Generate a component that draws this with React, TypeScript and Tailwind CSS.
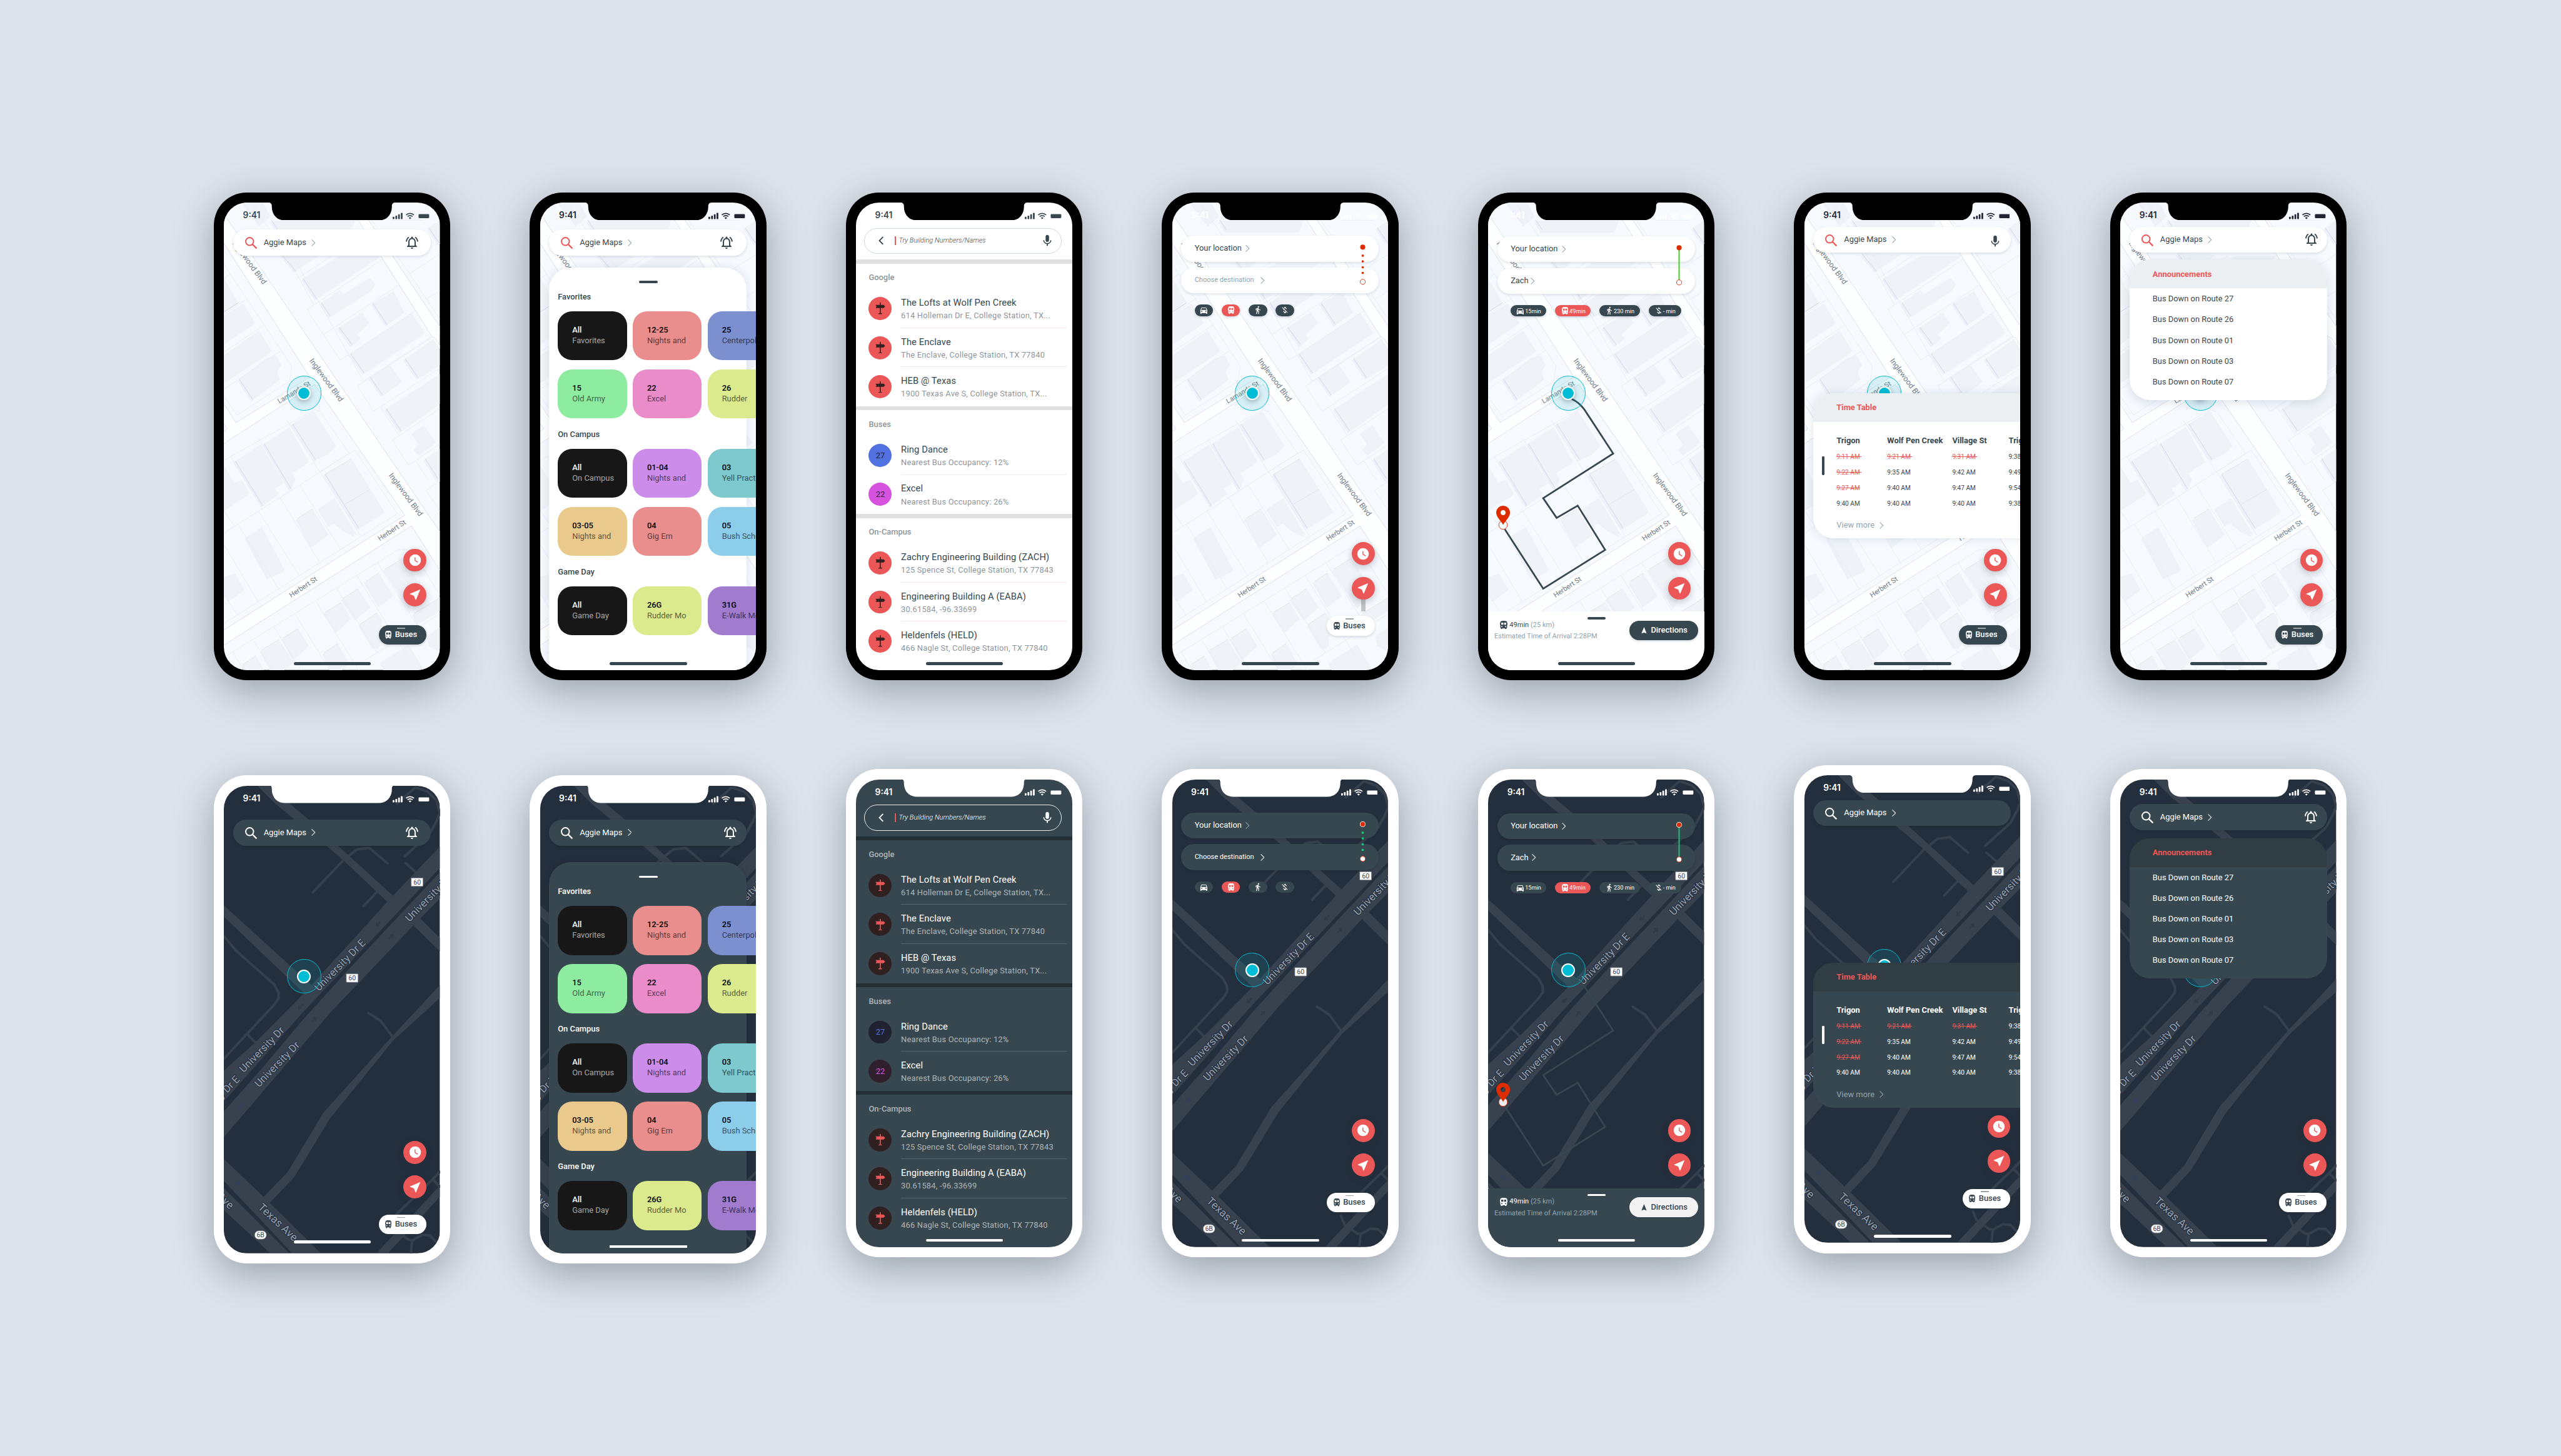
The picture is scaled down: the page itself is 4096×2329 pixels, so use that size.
import React from "react";
import {
  MdDirectionsCar,
  MdDirectionsWalk,
  MdMic,
  MdMoneyOff,
  MdNavigation,
  MdNearMe,
  MdOutlineNotificationsActive,
  MdWatchLater,
} from "react-icons/md";

type Pt = [number, number];
const SX = 1 / 3;
const SY = 1 / 1.7818;

/* Map geometry is digitised on a 1125 x 1447 grid and projected to the 375 x 812 screen. */
const path = (src: string, ox: number, oy: number, close: boolean) => {
  const pts: Pt[] = src
    .trim()
    .split(/\s+/)
    .map((p) => {
      const [x, y] = p.split(",").map(Number);
      return [(x - ox) * SX, (y - oy) * SY] as Pt;
    });
  return "M" + pts.map(([x, y]) => `${x.toFixed(1)} ${y.toFixed(1)}`).join("L") + (close ? "Z" : "");
};
const L = (s: string) => path(s, 87, 57, false);
const LA = (s: string) => path(s, 87, 57, true);
const D = (s: string) => path(s, 87, 80, false);
const DA = (s: string) => path(s, 87, 80, true);

const lightRoads = [
  "87,92 215,204 1212,1075 1212,1195 1065,1058 87,1427 87,1380 1030,1025 560,620 87,803 87,740 105,757 87,770 87,680 150,738 535,597 87,183",
  "729,57 780,57 840,110 975,230 1212,440 1212,510 1170,470 905,222",
];
const lightBlocks = ["87,740 105,757 87,768"];
const roadEdges = [
  "87,183 535,597 150,738 87,680",
  "87,740 105,757 87,766",
  "87,92 215,204 1212,1075",
  "87,803 560,620 1030,1025 87,1380",
  "87,1427 1065,1058 1212,1195",
  "729,57 905,222 1170,470 1190,478 1212,500",
  "780,57 975,230 1212,440",
];
const parcels = [
  "87,245 120,278 440,562 430,610 155,715 87,655",
  "87,293 120,278",
  "87,403 207,355",
  "87,520 298,436",
  "87,635 383,516",
  "230,57 400,205 555,373",
  "468,293 650,222",
  "520,388 915,232",
  "520,388 695,545 1085,393",
  "608,465 997,313",
  "440,215 815,610",
  "815,610 1175,470",
  "920,240 1175,470",
  "782,625 868,703 1212,570",
  "782,625 1212,459",
  "905,692 1000,777",
  "965,792 1050,870 1212,805",
  "965,792 1212,695",
  "1087,858 1150,915",
  "1212,920 1140,948 1212,1010",
  "1055,277 1212,217",
  "1140,357 1212,330",
  "860,112 1055,277 1212,418",
  "960,112 1130,112",
  "87,855 560,698 590,705 740,833 590,890 380,970 87,1080",
  "590,890 770,823 990,1020 87,1360",
  "120,842 290,1000",
  "268,787 440,945",
  "415,730 800,1088",
  "483,932 695,1130",
  "380,970 585,1170",
  "268,1012 480,1212",
  "160,1052 372,1252",
  "87,1115 265,1292",
  "87,1010 140,1057",
  "87,1270 157,1333",
  "87,1465 1000,1130 1065,1133 1212,1270",
  "135,1450 190,1504",
  "245,1415 340,1504",
  "350,1373 490,1504",
  "460,1332 640,1504",
  "567,1292 790,1504",
  "675,1252 885,1450",
  "780,1212 1040,1460",
  "888,1172 1110,1380",
  "820,1475 1212,1330",
];
const buildings = [
  "87,290 163,367 87,396",
  "87,405 190,370 250,430 87,495",
  "87,530 270,453 337,517 87,615",
  "168,604 305,540 360,530 387,560 365,580 378,605 238,667",
  "385,215 460,268 585,218",
  "190,57 290,57 330,100 280,125",
  "335,112 770,112 750,145 370,145",
  "500,292 690,222 905,222 570,355",
  "595,367 690,328 712,340 848,290 877,310 858,328 640,410",
  "688,443 808,397 845,430 780,465 798,478 755,500",
  "862,368 973,332 1027,398 937,435",
  "748,525 1065,398 1133,460 818,585",
  "850,598 952,558 1015,612 915,653",
  "1032,540 1190,475 1212,500 1212,560 1100,600",
  "933,695 1212,587 1212,680 1010,765",
  "1073,768 1130,746 1192,800 1112,835 1085,818 1112,800",
  "1137,850 1212,820 1212,920 1200,912",
  "1155,135 1212,112 1212,185",
  "147,857 280,805 400,925 350,940 372,958 290,995",
  "297,803 430,752 530,860 440,893 460,915 437,945",
  "445,742 555,702 672,810 640,830 565,853",
  "615,898 752,850 925,1015 790,1065",
  "470,1035 550,1005 632,1085 550,1120",
  "585,1003 665,972 780,1087 720,1070 670,1045 640,1055",
  "205,1092 285,1062 405,1195 320,1218",
  "87,870 140,925 180,915 222,958 87,1010",
  "87,1215 145,1205 193,1255 120,1287 87,1255",
  "283,1442 375,1410 450,1480 400,1504 340,1504",
  "395,1405 475,1376 530,1430 455,1468",
  "615,1325 700,1295 750,1345 680,1383",
  "707,1283 787,1252 850,1310 780,1345",
  "797,1362 885,1327 910,1345 900,1432 870,1432",
  "827,1230 895,1204 970,1275 900,1305",
  "927,1192 1020,1158 1110,1240 1060,1310",
  "1080,1328 1212,1280 1212,1320 1100,1360",
  "910,1478 1050,1425 1130,1504 930,1504",
  "1155,1395 1212,1372 1212,1440 1165,1425",
  "610,1450 680,1422 740,1485 700,1504 650,1504",
  "185,1487 255,1460 295,1504 200,1504",
];
const buildingSides = [
  "385,215 460,268",
  "335,112 370,142",
  "500,292 570,355",
  "595,367 640,407",
  "688,443 755,497",
  "862,368 937,435",
  "748,525 818,585",
  "850,598 915,653",
  "1032,540 1100,600",
  "933,695 1010,763",
  "1137,850 1203,912",
  "1155,135 1212,185",
  "168,604 238,667",
  "147,857 290,995",
  "297,803 437,943",
  "445,742 565,853",
  "615,898 790,1065",
  "87,396 163,367",
];
const buildingTops = [
  "712,993 850,945",
  "615,898 752,850",
  "283,1442 375,1410",
  "395,1405 475,1376",
  "615,1325 700,1295",
  "707,1283 787,1252",
  "797,1362 885,1327",
  "827,1230 895,1204",
  "927,1192 1020,1158",
  "1080,1328 1212,1280",
  "610,1450 680,1422",
  "185,1487 255,1460",
  "470,1035 550,1005",
];

function LightLabel({ x, y, angle, size, children }: { x: number; y: number; angle: number; size: number; children: string }) {
  return (
    <text
      transform={`translate(${x} ${y}) rotate(${angle})`}
      fontSize={size}
      fill="#717d89"
      stroke="#ffffff"
      strokeWidth="2"
      paintOrder="stroke"
      fontFamily="Roboto, sans-serif"
    >
      {children}
    </text>
  );
}

function LightMap() {
  return (
    <svg viewBox="0 0 375 812" className="absolute inset-0 h-[812px] w-[375px]">
      <rect width="375" height="812" fill="#f6f9fe" />
      <g fill="#eff1fa" transform="translate(-3 3)">
        {buildings.map((b) => (
          <path key={b} d={LA(b)} />
        ))}
      </g>
      <g fill="#eff3f8">
        {buildings.map((b) => (
          <path key={b} d={LA(b)} />
        ))}
      </g>
      <g fill="none" stroke="#e8ecf4" strokeWidth="0.9">
        {parcels.map((b) => (
          <path key={b} d={L(b)} />
        ))}
      </g>
      <g fill="none" stroke="#dadeee" strokeWidth="1.3">
        {buildingSides.map((b) => (
          <path key={b} d={L(b)} />
        ))}
      </g>
      <g fill="none" stroke="#e0e3e9" strokeWidth="1">
        {buildingTops.map((b) => (
          <path key={b} d={L(b)} />
        ))}
      </g>
      <g fill="#fdfefe">
        {lightRoads.map((b) => (
          <path key={b} d={LA(b)} />
        ))}
      </g>
      <g fill="#f6f9fe">
        {lightBlocks.map((b) => (
          <path key={b} d={LA(b)} />
        ))}
      </g>
      <g fill="none" stroke="#e4e7ef" strokeWidth="1.2">
        {roadEdges.map((b) => (
          <path key={b} d={L(b)} />
        ))}
      </g>
      <LightLabel x={14.5} y={71} angle={53.5} size={13.2}>Inglewood Blvd</LightLabel>
      <LightLabel x={148} y={275} angle={53.5} size={13.2}>Inglewood Blvd</LightLabel>
      <LightLabel x={286} y={474} angle={53.5} size={13.2}>Inglewood Blvd</LightLabel>
      <LightLabel x={117} y={686.5} angle={-33.5} size={12.2}>Herbert St</LightLabel>
      <LightLabel x={271} y={588} angle={-33.5} size={12.2}>Herbert St</LightLabel>
      <LightLabel x={96.5} y={349.5} angle={-31} size={12}>Lamanda St</LightLabel>
    </svg>
  );
}

const darkAreas = [
  "87,962 265,866 500,725 968,420 1212,268 1212,335 500,780 87,1057",
  "87,1088 300,945 500,803 750,640 1212,348 1212,430 1075,512 645,780 87,1168",
  "262,80 325,80 430,135 540,190 680,265 968,420 940,440 710,310 620,265 355,135",
  "87,450 545,697 505,722 87,485",
  "1110,490 1212,550 1212,592 1075,512",
  "1212,697 960,858 605,1092 420,1275 295,1352 325,1372 455,1290 640,1110 970,868 1212,737",
  "87,1235 300,1355 590,1525 440,1525 87,1303",
  "87,1325 425,1525 325,1525 87,1393",
  "1212,1318 885,1525 945,1525 1212,1353",
];
const darkLanes = [
  "87,545 150,590 350,695 372,720 372,738 350,757 87,925",
  "210,850 265,882",
  "550,410 710,310 780,277 845,272 940,320",
  "815,452 885,408",
  "1030,298 1160,228 1195,190 1212,165 1195,125 1150,98 1085,85 990,135",
  "1035,320 1090,348",
  "840,783 905,808 970,860",
  "980,1410 1175,1298 1212,1275",
  "1175,1298 1212,1320",
  "965,1430 985,1458 1050,1485 1068,1487 1120,1470 1160,1472 1190,1490",
  "1068,1487 1062,1525",
];

function DarkLabel({ x, y, angle, end, size = 18, children }: {
  x: number;
  y: number;
  angle: number;
  end?: boolean;
  size?: number;
  children: string;
}) {
  return (
    <text
      transform={`translate(${x} ${y}) rotate(${angle})`}
      fontSize={size}
      fill="#96a0ad"
      stroke="#242f3e"
      strokeWidth="2.6"
      strokeLinejoin="round"
      paintOrder="stroke"
      textAnchor={end ? "end" : "start"}
      fontFamily="Roboto, sans-serif"
    >
      {children}
    </text>
  );
}

function Shield({ x, y, round, children }: { x: number; y: number; round?: boolean; children: string }) {
  return (
    <g>
      <rect x={x} y={y} width="20.5" height="14.5" rx={round ? 7 : 0.5} fill="#ffffff" stroke="#6b6f76" strokeWidth="0.8" />
      <text x={x + 10.25} y={y + 11.3} fontSize="11.5" textAnchor="middle" fill="#3c4350" fontFamily="Roboto, sans-serif">
        {children}
      </text>
    </g>
  );
}

function LaneArrow({ x, y, angle, color }: { x: number; y: number; angle: number; color: string }) {
  return (
    <path
      transform={`translate(${x} ${y}) rotate(${angle})`}
      d="M-6 0H3M0 -3.5L4.5 0L0 3.5"
      fill="none"
      stroke={color}
      strokeWidth="2"
    />
  );
}

function DarkMap() {
  return (
    <svg viewBox="0 0 375 812" className="absolute inset-0 h-[812px] w-[375px]">
      <rect width="375" height="812" fill="#242f3d" />
      <g fill="none" stroke="#36404c" strokeWidth="4.4" strokeLinejoin="round" strokeLinecap="round">
        {darkLanes.map((b) => (
          <path key={b} d={D(b)} />
        ))}
      </g>
      <g fill="#38414e">
        {darkAreas.map((b) => (
          <path key={b} d={DA(b)} />
        ))}
      </g>
      <LaneArrow x={27.5} y={557} angle={-45} color="#333f5e" />
      <LaneArrow x={26} y={692} angle={215} color="#333f5e" />
      <LaneArrow x={157} y={406} angle={-45} color="#303945" />
      <LaneArrow x={133} y={384} angle={135} color="#303945" />
      <LaneArrow x={291} y={262} angle={-45} color="#303945" />
      <LaneArrow x={268} y={240} angle={135} color="#303945" />
      <DarkLabel x={165} y={357.5} angle={-45.5} size={18.3}>University Dr E</DarkLabel>
      <DarkLabel x={34.5} y={499} angle={-45.5} size={18.3}>University Dr</DarkLabel>
      <DarkLabel x={61} y={524.5} angle={-45.5} size={18.3}>University Dr</DarkLabel>
      <DarkLabel x={322.5} y={237} angle={-45.5} size={18.3}>University Dr</DarkLabel>
      <DarkLabel x={28.5} y={511} angle={-45.5} end>University Dr E</DarkLabel>
      <DarkLabel x={58.5} y={733.5} angle={43} size={19}>Texas Ave</DarkLabel>
      <DarkLabel x={10} y={736} angle={43} end size={19}>Texas Ave</DarkLabel>
      <Shield x={212.7} y={326.7}>60</Shield>
      <Shield x={325.5} y={160}>60</Shield>
      <Shield x={53.5} y={773} round>6B</Shield>
    </svg>
  );
}

function Marker({ dark }: { dark: boolean }) {
  return (
    <div className="absolute left-[109px] top-[301px] flex size-[60px] items-center justify-center rounded-full border border-[#00bcd4] bg-[#00bcd4]/12">
      <div
        className={
          dark
            ? "size-[24px] rounded-full border-[3px] border-white bg-[#00bcd4]"
            : "size-[24px] rounded-full border-[3px] border-white bg-[#00bcd4] shadow-[0_3px_10px_rgba(0,0,0,0.3)]"
        }
      />
    </div>
  );
}

function Chevron({ className }: { className: string }) {
  return (
    <svg viewBox="0 0 7 12" className={className} fill="none" stroke="currentColor" strokeWidth="1.1">
      <path d="M0.6 0.5L6.2 6L0.6 11.5" />
    </svg>
  );
}

function BusIcon({ className }: { className: string }) {
  return (
    <svg viewBox="0 0 22 26" preserveAspectRatio="none" className={className} fill="currentColor">
      <path
        fillRule="evenodd"
        d="M11 0C4.5 0 1 1.3 1 4.6V7H0V13H1V20.6C1 21.8 1.8 22.7 2.8 23V25C2.8 25.6 3.3 26 3.9 26H6C6.6 26 7.1 25.6 7.1 25V23.4H14.9V25C14.9 25.6 15.4 26 16 26H18.1C18.7 26 19.2 25.6 19.2 25V23C20.2 22.7 21 21.8 21 20.6V13H22V7H21V4.6C21 1.3 17.5 0 11 0ZM3.6 6H9.8V12.4H3.6ZM12.2 6H18.4V12.4H12.2ZM5.6 16.2A1.8 1.8 0 1 1 5.6 19.8A1.8 1.8 0 1 1 5.6 16.2ZM16.4 16.2A1.8 1.8 0 1 1 16.4 19.8A1.8 1.8 0 1 1 16.4 16.2Z"
      />
    </svg>
  );
}

function SignpostIcon() {
  return (
    <svg viewBox="0 0 17 20" className="h-[20px] w-[17px]" fill="currentColor">
      <path d="M7.6 0H9.4V4.2H14.4L17 6.9L14.4 9.6H9.4V18.4H11.6V20H5.4V18.4H7.6V9.6H0.6L2 6.9L0.4 4.2H7.6Z" />
    </svg>
  );
}

function StatusBar({ tone }: { tone: string }) {
  return (
    <div className={`relative flex h-[44px] shrink-0 items-start ${tone}`}>
      <span className="ml-[33px] mt-[15px] w-[54px] font-[Inter] text-[15px] leading-[15px] font-semibold">9:41</span>
      <svg viewBox="0 0 64 12" className="ml-[206px] mt-[17px] h-[12px] w-[64px]" fill="currentColor">
        <rect x="0" y="7.4" width="3" height="4" rx="0.8" />
        <rect x="4.8" y="5.4" width="3" height="6" rx="0.8" />
        <rect x="9.5" y="3" width="3" height="8.4" rx="0.8" />
        <rect x="14.2" y="0.6" width="3" height="10.8" rx="0.8" />
        <g fill="none" stroke="currentColor" strokeWidth="1.9">
          <path d="M23.4 4.2A10.2 10.2 0 0 1 37 4.2" />
          <path d="M25.8 7A6.4 6.4 0 0 1 34.6 7" />
        </g>
        <path d="M27.9 9.2A3.3 3.3 0 0 1 32.5 9.2L30.2 11.5Z" />
        <rect x="45" y="2.6" width="18.4" height="7.2" rx="1.6" />
      </svg>
    </div>
  );
}

function Notch({ color }: { color: string }) {
  return (
    <svg viewBox="0 0 221 31" className="absolute left-[77px] top-[-0.5px] h-[31px] w-[221px]" fill={color}>
      <path d="M0 0C4 0 6.2 2 6.2 6V7.5C6.5 21 15 31 29 31H192C206 31 214.500 21 214.800 7.500V6C214.800 2 217 0 221 0Z" />
    </svg>
  );
}

function HomeBar({ color, top = "top-[798px]" }: { color: string; top?: string }) {
  return <div className={`absolute left-[121px] h-[5px] w-[134px] ${top} ${color}`} />;
}

function Phone({ dark, drop = "", backdrop, route, status, children, home }: {
  dark: boolean;
  drop?: string;
  backdrop?: string;
  route?: React.ReactNode;
  status?: string;
  children: React.ReactNode;
  home?: React.ReactNode;
}) {
  return (
    <div
      className={`shrink-0 rounded-[57px] p-[18px] shadow-[0_18px_68px_rgba(40,50,65,0.37)] ${dark ? "bg-white" : "bg-black"} ${drop}`}
    >
      <div className={`relative flex h-[812px] w-[375px] flex-col overflow-hidden rounded-[40px] ${backdrop ?? ""}`}>
        {!backdrop && (dark ? <DarkMap /> : <LightMap />)}
        {route}
        {!backdrop && <Marker dark={dark} />}
        <StatusBar tone={status ?? (dark ? "text-white" : "text-[#232535]")} />
        {children}
        <Notch color={dark ? "#ffffff" : "#000000"} />
        {home ?? <HomeBar color={dark ? "rounded-full bg-white" : "rounded-full bg-[#37474f]"} />}
      </div>
    </div>
  );
}

const barBase = "relative mx-[16px] flex h-[45px] shrink-0 items-center rounded-[22.5px]";
const lightSurface = "bg-white shadow-[0_2px_5px_rgba(40,60,80,0.14)]";
const darkSurface = "bg-[#37474f] shadow-[0_2px_6px_rgba(0,0,0,0.1)]";

function SearchBar({ dark, offset, trailing }: { dark: boolean; offset: string; trailing?: React.ReactNode }) {
  return (
    <div className={`${barBase} ${offset} ${dark ? darkSurface : lightSurface}`}>
      <svg
        viewBox="0 0 21 21"
        className={`ml-[20.5px] mt-[2px] size-[21px] ${dark ? "text-white" : "text-[#eb5757]"}`}
        fill="none"
        stroke="currentColor"
        strokeWidth="2.1"
      >
        <circle cx="7.9" cy="7.9" r="6.8" />
        <path d="M12.700 12.700L20 20" strokeWidth="2.500" />
      </svg>
      <span className={`ml-[11.500px] text-[14px] leading-[16px] ${dark ? "text-white" : "text-[#37474f]"}`}>Aggie Maps</span>
      <Chevron className={`ml-[9px] h-[12px] w-[7px] ${dark ? "text-white" : "text-[#90a4ae]"}`} />
      {trailing}
    </div>
  );
}

function Bell({ dark, place }: { dark: boolean; place: string }) {
  return (
    <MdOutlineNotificationsActive className={`absolute size-[26px] ${place} ${dark ? "text-white" : "text-[#37474f]"}`} />
  );
}

function Fabs({ place }: { place: string }) {
  return (
    <div className={`absolute flex flex-col gap-[20px] ${place}`}>
      <div className="flex size-[40px] items-center justify-center rounded-full bg-[#eb5757] text-white shadow-[0_4px_12px_rgba(30,45,60,0.25)]">
        <MdWatchLater className="size-[24px]" />
      </div>
      <div className="flex size-[40px] items-center justify-center rounded-full bg-[#eb5757] text-white shadow-[0_4px_12px_rgba(30,45,60,0.25)]">
        <MdNearMe className="size-[24px]" />
      </div>
    </div>
  );
}

function BusesPill({ place, filled }: { place: string; filled?: boolean }) {
  return (
    <div
      className={`absolute flex h-[34px] w-[83px] items-center rounded-full shadow-[0_2px_5px_rgba(30,45,60,0.15)] ${place} ${
        filled ? "bg-[#37474f] text-white" : "bg-white text-[#37474f]"
      }`}
    >
      <div className="absolute left-[32px] top-[4px] h-[2px] w-[14px] bg-[#9ea3a6]" />
      <BusIcon className="ml-[11px] h-[13.500px] w-[11px]" />
      <span className="ml-[6px] text-[14px] leading-[16px] font-medium">Buses</span>
    </div>
  );
}

type Card = { code: string; name: string; tone: string };
const groups: { title: string; rows: Card[][] }[] = [
  {
    title: "Favorites",
    rows: [
      [
        { code: "All", name: "Favorites", tone: "bg-[#171717] text-white" },
        { code: "12-25", name: "Nights and", tone: "bg-[#e98e8c] text-black" },
        { code: "25", name: "Centerpole", tone: "bg-[#7c8fce] text-black" },
      ],
      [
        { code: "15", name: "Old Army", tone: "bg-[#8eeca1] text-black" },
        { code: "22", name: "Excel", tone: "bg-[#ea8cca] text-black" },
        { code: "26", name: "Rudder", tone: "bg-[#dbea8c] text-black" },
      ],
    ],
  },
  {
    title: "On Campus",
    rows: [
      [
        { code: "All", name: "On Campus", tone: "bg-[#171717] text-white" },
        { code: "01-04", name: "Nights and", tone: "bg-[#cb8cea] text-black" },
        { code: "03", name: "Yell Practice", tone: "bg-[#7dc9cd] text-black" },
      ],
      [
        { code: "03-05", name: "Nights and", tone: "bg-[#eaca8c] text-black" },
        { code: "04", name: "Gig Em", tone: "bg-[#e98e8c] text-black" },
        { code: "05", name: "Bush School", tone: "bg-[#8ccdea] text-black" },
      ],
    ],
  },
  {
    title: "Game Day",
    rows: [
      [
        { code: "All", name: "Game Day", tone: "bg-[#171717] text-white" },
        { code: "26G", name: "Rudder Mo", tone: "bg-[#dbea8c] text-black" },
        { code: "31G", name: "E-Walk Mo", tone: "bg-[#a17cce] text-black" },
      ],
    ],
  },
];

function RoutesSheet({ dark, offset }: { dark: boolean; offset: string }) {
  return (
    <div className={`relative mx-[16px] flex h-[720px] shrink-0 flex-col rounded-t-[38px] pl-[15px] ${offset} ${dark ? "bg-[#37474f] shadow-[0_0_12px_rgba(0,0,0,0.15)]" : "bg-white shadow-[0_0_14px_rgba(60,80,110,0.14)]"}`}>
      <div className={`ml-[141px] mt-[23px] h-[4px] w-[32px] shrink-0 rounded-full ${dark ? "bg-white" : "bg-[#37474f]"}`} />
      {groups.map((g) => (
        <div key={g.title} className="flex flex-col">
          <span className={`mt-[16px] text-[14px] leading-[16px] font-medium ${dark ? "text-white" : "text-[#37474f]"}`}>
            {g.title}
          </span>
          <div className="mb-[4px] mt-[17px] flex flex-col gap-[16px]">
            {g.rows.map((row, i) => (
              <div key={i} className="flex gap-[10px]">
                {row.map((c) => (
                  <div key={c.code} className={`h-[85px] w-[120px] shrink-0 rounded-[25px] pl-[25px] pt-[24px] text-[14px] whitespace-nowrap ${c.tone}`}>
                    <div className="leading-[18px] font-medium">{c.code}</div>
                    <div className="leading-[18px] opacity-60">{c.name}</div>
                  </div>
                ))}
              </div>
            ))}
          </div>
        </div>
      ))}
    </div>
  );
}

type Place = { title: string; detail: string; bus?: string };
const sections: { label: string; items: Place[] }[] = [
  {
    label: "Google",
    items: [
      { title: "The Lofts at Wolf Pen Creek", detail: "614 Holleman Dr E, College Station, TX..." },
      { title: "The Enclave", detail: "The Enclave, College Station, TX 77840" },
      { title: "HEB @ Texas", detail: "1900 Texas Ave S, College Station, TX..." },
    ],
  },
  {
    label: "Buses",
    items: [
      { title: "Ring Dance", detail: "Nearest Bus Occupancy: 12%", bus: "27" },
      { title: "Excel", detail: "Nearest Bus Occupancy: 26%", bus: "22" },
    ],
  },
  {
    label: "On-Campus",
    items: [
      { title: "Zachry Engineering Building (ZACH)", detail: "125 Spence St, College Station, TX 77843" },
      { title: "Engineering Building A (EABA)", detail: "30.61584, -96.33699" },
      { title: "Heldenfels (HELD)", detail: "466 Nagle St, College Station, TX 77840" },
    ],
  },
];

function badgeTone(dark: boolean, bus?: string) {
  if (bus === "27") return dark ? "bg-[#20222f] text-[#5271e0]" : "bg-[#5271e0] text-[#20222f]";
  if (bus === "22") return dark ? "bg-[#30202e] text-[#d653e0]" : "bg-[#d653e0] text-[#30202e]";
  return dark ? "bg-[#302020] text-[#eb5757]" : "bg-[#eb5757] text-[#302020]";
}

function SearchScreen({ dark }: { dark: boolean }) {
  return (
    <>
      <div
        className={`ml-[14px] mb-[10px] flex h-[45px] w-[343px] shrink-0 items-center rounded-full border ${
          dark ? "border-white/90 text-white" : "border-[#cfd8dc] text-[#37474f]"
        }`}
      >
        <svg viewBox="0 0 9 15" className="ml-[23.500px] h-[15px] w-[9px]" fill="none" stroke="currentColor" strokeWidth="2">
          <path d="M8 1L1.700 7.500L8 14" />
        </svg>
        <div className="ml-[19.500px] h-[15px] w-[2px] bg-[#eb5757]" />
        <span className="ml-[5px] text-[12px] leading-[14px] font-light italic">Try Building Numbers/Names</span>
        <MdMic className="ml-auto mr-[12px] size-[24px]" />
      </div>
      {sections.map((s) => (
        <div key={s.label} className="flex shrink-0 flex-col">
          <div className={`h-[7px] ${dark ? "bg-[#232f35]" : "bg-[#e0e0e0]"}`} />
          <span className={`mb-[11px] ml-[22px] mt-[16px] text-[14px] leading-[17px] font-medium ${dark ? "text-white/60" : "text-[#37474f]/60"}`}>
            {s.label}
          </span>
          {s.items.map((p, i) => (
            <div key={p.title} className="flex h-[68px] items-start pl-[22px]">
              <div className={`mt-[14px] flex size-[40px] items-center justify-center rounded-full text-[14px] ${badgeTone(dark, p.bus)}`}>
                {p.bus ?? <SignpostIcon />}
              </div>
              <div
                className={`ml-[16px] flex h-[68px] w-[288px] flex-col border-b pt-[14px] whitespace-nowrap ${
                  i === s.items.length - 1 ? "border-transparent" : dark ? "border-[#52646c]" : s.label === "Buses" ? "border-[#eceff1]" : "border-[#fbe3e8]"
                }`}
              >
                <span className={`text-[16px] leading-[20px] tracking-[0.1px] ${dark ? "text-white" : "text-[#37474f]"}`}>{p.title}</span>
                <span className={`mt-[4px] text-[14px] leading-[17px] tracking-[0.23px] ${dark ? "text-white/60" : "text-[#37474f]/60"}`}>{p.detail}</span>
              </div>
            </div>
          ))}
        </div>
      ))}
    </>
  );
}

type Mode = { icon: React.ReactNode; time: string; width: string; active?: boolean };
const modes: Mode[] = [
  { icon: <MdDirectionsCar className="size-[16px] shrink-0" />, time: "15min", width: "w-[62px]" },
  { icon: <BusIcon className="mx-[2.500px] h-[13px] w-[11px] shrink-0" />, time: "49min", width: "w-[62px]", active: true },
  { icon: <MdDirectionsWalk className="size-[15px] shrink-0" />, time: "230 min", width: "w-[71px]" },
  { icon: <MdMoneyOff className="size-[15px] shrink-0" />, time: "- min", width: "w-[56px]" },
];

function ModeChips({ dark, withTime }: { dark: boolean; withTime?: boolean }) {
  return (
    <div className="relative ml-[39px] mt-[19.500px] flex shrink-0 gap-[15px]">
      {modes.map((m) => (
        <div
          key={m.time}
          className={`flex h-[20px] items-center justify-center rounded-full text-[10px] leading-[12px] whitespace-nowrap text-white ${
            withTime ? m.width : "w-[32px]"
          } ${m.active ? "bg-[#eb5757]" : "bg-[#37474f]"} ${dark ? "" : "shadow-[0_2px_4px_rgba(30,45,60,0.18)]"}`}
        >
          {m.icon}
          {withTime && <span>{m.time}</span>}
        </div>
      ))}
    </div>
  );
}

function TripBars({ dark, routed }: { dark: boolean; routed?: boolean }) {
  const text = dark ? "text-white" : "text-[#37474f]";
  const muted = dark ? "text-white" : "text-[#90a4ae]";
  return (
    <div className={`relative flex shrink-0 flex-col gap-[10px] ${routed ? "mt-[14.500px]" : "mt-[13.500px]"}`}>
      <div className={`${barBase} pl-[23px] ${dark ? darkSurface : lightSurface}`}>
        <span className={`text-[14px] leading-[16px] ${text}`}>Your location</span>
        <Chevron className={`ml-[7px] h-[12px] w-[7px] ${dark && !routed ? "text-[#90a4ae]" : muted}`} />
      </div>
      <div className={`${barBase} pl-[23px] ${dark ? darkSurface : lightSurface}`}>
        {routed ? (
          <>
            <span className={`text-[14px] leading-[16px] ${text}`}>Zach</span>
            <Chevron className={`h-[12px] w-[7px] ${dark ? "ml-[6px]" : "ml-[4px]"} ${muted}`} />
          </>
        ) : (
          <>
            <span className={`text-[12px] leading-[14px] ${muted}`}>Choose destination</span>
            <Chevron className={`ml-[11px] h-[12px] w-[7px] ${muted}`} />
          </>
        )}
      </div>
      <svg viewBox="0 0 12 72" className="absolute left-[325px] top-[14px] h-[72px] w-[12px]">
        {routed ? (
          <rect x="5" y="8" width="2" height="54" fill={dark ? "#1cc878" : "#2bd600"} />
        ) : (
          [20.5, 30.5, 40.7, 50.5].map((y) => <circle key={y} cx="6" cy={y} r="2" fill={dark ? "#1cc878" : "#dd2c00"} />)
        )}
        <circle cx="6" cy="5.800" r="4.400" fill="#dd2c00" stroke={dark ? "#ffffff" : "none"} strokeWidth="1" />
        <circle cx="6" cy="66" r="4.500" fill="#ffffff" stroke="#dd2c00" strokeWidth="1" />
      </svg>
    </div>
  );
}

function RouteLine() {
  return (
    <svg viewBox="0 0 375 812" className="absolute inset-0 h-[812px] w-[375px]" fill="none">
      <path
        d="M145 341C155 346 160 350 168.300 361L217.300 436L95.700 513.500L119 547.700L155.700 526.500L203.300 603.300L95.700 670.700L29 567.500"
        stroke="#37474f"
        strokeWidth="3"
      />
    </svg>
  );
}

function Pin() {
  return (
    <svg viewBox="0 0 24 42" className="absolute left-[14px] top-[527px] h-[42px] w-[24px]">
      <circle cx="12" cy="33.500" r="7.500" fill="#ffffff" fillOpacity="0.9" stroke="#dd2c00" strokeWidth="1" />
      <path fillRule="evenodd" d="M12 0C5.400 0 0 5.200 0 12C0 20 9 27 12 33C15 27 24 20 24 12C24 5.200 18.600 0 12 0ZM12 7.600A4.300 4.300 0 1 1 12 16.200A4.300 4.300 0 1 1 12 7.600Z" fill="#dd2c00" />
    </svg>
  );
}

function DirectionsSheet({ dark }: { dark: boolean }) {
  return (
    <div className={`absolute inset-x-0 bottom-0 flex h-[102px] items-start justify-between pr-[10px] pl-[10.500px] ${dark ? "bg-[#37474f]" : "bg-white"}`}>
      <div className={`absolute left-[172px] top-[10px] h-[4px] w-[32px] rounded-full ${dark ? "bg-white" : "bg-[#37474f]"}`} />
      <div className="flex flex-col pt-[16px] text-[12px] whitespace-nowrap">
        <div className={`flex items-center pl-[9.500px] leading-[15px] ${dark ? "text-white" : "text-[#37474f]"}`}>
          <BusIcon className="h-[14.500px] w-[13px]" />
          <span className="ml-[4px]">49min</span>
          <span className="ml-[3px] text-[#90a4ae]">(25 km)</span>
        </div>
        <span className="mt-[5px] leading-[15px] text-[#90a4ae]">Estimated Time of Arrival 2:28PM</span>
      </div>
      <div
        className={`mt-[16px] flex h-[34px] w-[120px] items-center rounded-full pl-[18.500px] shadow-[0_2px_4px_rgba(30,45,60,0.18)] ${
          dark ? "bg-[#f2f2f2] text-[#37474f]" : "bg-[#37474f] text-white"
        }`}
      >
        <MdNavigation className="size-[14px]" preserveAspectRatio="none" />
        <span className="ml-[5px] text-[14px] leading-[16px] font-medium">Directions</span>
      </div>
    </div>
  );
}

const timetable = [
  { stop: "Trigon", width: "w-[88px]", times: ["9:11 AM ", "9:22 AM ", "9:27 AM", "9:40 AM"], missed: 3 },
  { stop: "Wolf Pen Creek", width: "w-[113px]", times: ["9:21 AM ", "9:35 AM", "9:40 AM", "9:40 AM"], missed: 1 },
  { stop: "Village St", width: "w-[98px]", times: ["9:31 AM ", "9:42 AM", "9:47 AM", "9:40 AM"], missed: 1 },
  { stop: "Trigon", width: "w-[88px]", times: ["9:38 AM", "9:49 AM", "9:54 AM", "9:38 AM"], missed: 0 },
];

function TimeTable({ dark, place }: { dark: boolean; place: string }) {
  return (
    <div
      className={`absolute left-[16px] flex h-[252px] w-[460px] flex-col overflow-hidden rounded-[36px] ${place} ${
        dark ? "bg-[#37474f] text-white" : "bg-white text-[#37474f]"
      }`}
    >
      <div className={`flex h-[50px] shrink-0 items-center pl-[40px] text-[14px] font-bold text-[#eb5757] ${dark ? "bg-[#303d43]" : "bg-[#eceff1]"}`}>
        Time Table
      </div>
      <div className="flex pt-[24px]">
        <div className={`ml-[15px] mr-[21px] mt-[36px] h-[32px] w-[4px] shrink-0 rounded-[1.500px] ${dark ? "bg-white" : "bg-[#37474f]"}`} />
        {timetable.map((c, i) => (
          <div key={i} className={`flex shrink-0 flex-col whitespace-pre ${c.width}`}>
            <span className="mb-[7px] text-[14px] leading-[17px] font-bold">{c.stop}</span>
            {c.times.map((t, r) => (
              <span key={r} className={r < c.missed ? "self-start text-[11px] leading-[27px] text-[#eb5757] line-through" : "self-start text-[11px] leading-[27px]"}>
                {t}
              </span>
            ))}
          </div>
        ))}
      </div>
      <div className="mt-[15px] flex items-center pl-[40px] text-[14px] leading-[17px] text-[#90a4ae]">
        View more
        <Chevron className="ml-[9px] h-[12px] w-[7px]" />
      </div>
    </div>
  );
}

function Announcements({ dark, offset }: { dark: boolean; offset: string }) {
  return (
    <div
      className={`relative mx-[16px] flex h-[244px] shrink-0 flex-col overflow-hidden rounded-[36px] ${offset} ${
        dark ? "bg-[#37474f] text-white" : "bg-white text-[#37474f]"
      }`}
    >
      <div className={`flex h-[50px] shrink-0 items-center pl-[40px] text-[14px] font-bold text-[#eb5757] ${dark ? "bg-[#303d43]" : "bg-[#eceff1]"}`}>
        Announcements
      </div>
      {["27", "26", "01", "03", "07"].map((n) => (
        <span key={n} className="pl-[40px] text-[14px] leading-[36px]">
          Bus Down on Route {n}
        </span>
      ))}
    </div>
  );
}

export default function App() {
  return (
    <main className="h-[2329px] w-[4096px] overflow-hidden bg-[#dce3eb] font-[Roboto]">
      <div className="flex h-[2530px] w-[4449px] flex-col bg-[#dce3eb] [zoom:0.92086]">
        <div className="ml-[371px] mt-[334px] flex shrink-0 items-start gap-[138px]">
          <Phone dark={false} status="text-[#37474f]">
            <SearchBar dark={false} offset="mt-[3px]" trailing={<Bell dark={false} place="left-[298px] top-[9px]" />} />
            <Fabs place="left-[312px] top-[601px]" />
            <BusesPill filled place="left-[269px] top-[734px]" />
          </Phone>
          <Phone dark={false}>
            <SearchBar dark={false} offset="mt-[3px]" trailing={<Bell dark={false} place="left-[295px] top-[9px]" />} />
            <RoutesSheet dark={false} offset="mt-[21px]" />
          </Phone>
          <Phone dark={false} status="text-[#37474f]" backdrop="bg-white">
            <SearchScreen dark={false} />
          </Phone>
          <Phone dark={false} status="text-white">
            <TripBars dark={false} />
            <ModeChips dark={false} />
            <div className="absolute left-[328px] top-[688px] h-[22px] w-[8px] bg-[#c4c4c4]" />
            <Fabs place="left-[312px] top-[590px]" />
            <BusesPill place="left-[269px] top-[718px]" />
          </Phone>
          <Phone dark={false} status="text-white" route={<RouteLine />}>
            <Pin />
            <TripBars dark={false} routed />
            <ModeChips dark={false} withTime />
            <Fabs place="left-[312px] top-[590px]" />
            <DirectionsSheet dark={false} />
          </Phone>
          <Phone dark={false}>
            <SearchBar
              dark={false}
              offset="mt-[-2px]"
              trailing={<MdMic className="absolute left-[304px] top-[13px] size-[24px] text-[#37474f]" />}
            />
            <TimeTable dark={false} place="top-[331px] shadow-[0_0_16px_rgba(60,80,110,0.14)]" />
            <Fabs place="left-[312px] top-[601px]" />
            <BusesPill filled place="left-[269px] top-[734px]" />
          </Phone>
          <Phone dark={false}>
            <SearchBar dark={false} offset="mt-[-2px]" trailing={<Bell dark={false} place="left-[303px] top-[9px]" />} />
            <Announcements dark={false} offset="mt-[12px] shadow-[0_4px_16px_rgba(60,80,110,0.16)]" />
            <Fabs place="left-[312px] top-[601px]" />
            <BusesPill filled place="left-[269px] top-[734px]" />
          </Phone>
        </div>
        <div className="ml-[371px] mt-[147px] flex shrink-0 items-start gap-[138px]">
          <Phone dark drop="mt-[18px]" home={<HomeBar color="rounded-full bg-white" top="top-[790px]" />}>
            <SearchBar dark offset="mt-[15px]" trailing={<Bell dark place="left-[298px] top-[9px]" />} />
            <Fabs place="left-[312px] top-[617px]" />
            <BusesPill place="left-[269px] top-[745px]" />
          </Phone>
          <Phone dark drop="mt-[18px]" home={<HomeBar color="bg-white" />}>
            <SearchBar dark offset="mt-[15px]" trailing={<Bell dark place="left-[301px] top-[9px]" />} />
            <RoutesSheet dark offset="mt-[29px]" />
          </Phone>
          <Phone dark drop="mt-[7px]" backdrop="bg-[#37474f]">
            <SearchScreen dark />
          </Phone>
          <Phone dark drop="mt-[7px]">
            <TripBars dark />
            <ModeChips dark />
            <Fabs place="left-[312px] top-[590px]" />
            <BusesPill place="left-[269px] top-[718px]" />
          </Phone>
          <Phone dark drop="mt-[7px]" route={<RouteLine />}>
            <Pin />
            <TripBars dark routed />
            <ModeChips dark withTime />
            <Fabs place="left-[312px] top-[590px]" />
            <DirectionsSheet dark />
          </Phone>
          <Phone dark>
            <SearchBar dark offset="mt-[-1px]" />
            <TimeTable dark place="top-[325px]" />
            <Fabs place="left-[318px] top-[590px]" />
            <BusesPill place="left-[275px] top-[718px]" />
          </Phone>
          <Phone dark drop="mt-[7px]">
            <SearchBar dark offset="mt-[-1px]" trailing={<Bell dark place="left-[302px] top-[9px]" />} />
            <Announcements dark offset="mt-[14px]" />
            <Fabs place="left-[318px] top-[590px]" />
            <BusesPill place="left-[275px] top-[718px]" />
          </Phone>
        </div>
      </div>
    </main>
  );
}
